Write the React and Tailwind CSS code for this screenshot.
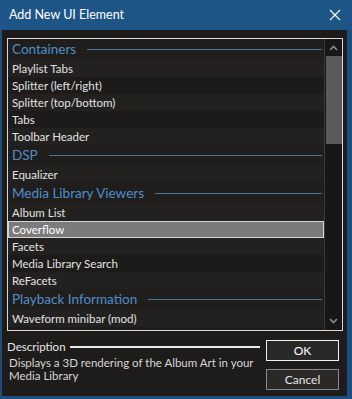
import React from "react";

const rows = [
  { type: "h", label: "Containers" },
  { label: "Playlist Tabs" },
  { label: "Splitter (left/right)" },
  { label: "Splitter (top/bottom)" },
  { label: "Tabs" },
  { label: "Toolbar Header" },
  { type: "h", label: "DSP" },
  { label: "Equalizer" },
  { type: "h", label: "Media Library Viewers" },
  { label: "Album List" },
  { label: "Coverflow", selected: true },
  { label: "Facets" },
  { label: "Media Library Search" },
  { label: "ReFacets" },
  { type: "h", label: "Playback Information" },
  { label: "Waveform minibar (mod)" },
];

const font = { fontFamily: 'Lato, "Noto Sans", sans-serif' };

function Row({ row, idx }) {
  if (row.type === "h") {
    return (
      <div className="h-[21px] flex items-center pl-[4px] pr-[2px] bg-[#1f1e1d]">
        <span className="text-[13.5px] leading-none text-[#4f8ec8] whitespace-nowrap">
          {row.label}
        </span>
        <div className="flex-1 h-px bg-[#4d7398] ml-[11px]" />
      </div>
    );
  }
  if (row.selected) {
    return (
      <div className="h-[17px] flex items-center pl-[3px] bg-[#7b7b7b] border border-[#d4d4d4] text-white text-[11.5px]">
        {row.label}
      </div>
    );
  }
  return (
    <div
      className={
        "h-[17px] flex items-center pl-[4px] text-[11.5px] text-[#e2e2e2] " +
        (idx % 2 ? "bg-[#232120]" : "bg-[#1c1b1a]")
      }
    >
      {row.label}
    </div>
  );
}

export default function App() {
  return (
    <div
      className="w-[352px] h-[399px] bg-[#1c4f7e] flex flex-col overflow-hidden"
      style={font}
    >
      {/* title bar */}
      <div className="h-[30px] flex items-center justify-between pl-[9px] pr-[11px] bg-[#1d5586]">
        <span className="text-white text-[12.5px]">Add New UI Element</span>
        <svg width="12" height="12" viewBox="0 0 12 12">
          <path d="M1 1L11 11M11 1L1 11" stroke="#ffffff" strokeWidth="1.2" />
        </svg>
      </div>

      {/* body */}
      <div className="flex-1 ml-[2px] mr-[5px] mb-[3px] bg-[#1e1c1b] flex flex-col pt-[8px] pl-[5px] pr-[4px]">
        <div className="h-[293px] border border-[#d8d8d8] flex">
          <div className="flex-1 flex flex-col">
            {rows.map((r, i) => (
              <Row key={i} row={r} idx={i} />
            ))}
          </div>
          <div className="w-[18px] border-l border-[#3a3a3a] bg-[#171717] flex flex-col">
            <div className="h-[17px] flex items-center justify-center">
              <svg width="9" height="6" viewBox="0 0 9 6">
                <path d="M1 5L4.5 1.5L8 5" stroke="#8a8a8a" strokeWidth="1.6" fill="none" />
              </svg>
            </div>
            <div className="h-[88px] bg-[#5a5a5a] ml-[1px]" />
            <div className="flex-1" />
            <div className="h-[18px] flex items-center justify-center">
              <svg width="9" height="6" viewBox="0 0 9 6">
                <path d="M1 1L4.5 4.5L8 1" stroke="#8a8a8a" strokeWidth="1.6" fill="none" />
              </svg>
            </div>
          </div>
        </div>

        <div className="flex mt-[9px]">
          <div className="flex-1 flex flex-col">
            <div className="flex items-center h-[14px]">
              <span className="text-[11.5px] text-[#e6e6e6] leading-none">Description</span>
              <div className="h-[2px] bg-[#e8e8e8] ml-[4px] w-[190px]" />
            </div>
            <div className="text-[11.5px] text-[#d6d6d6] leading-[13px] pl-[2px] mt-[2px] pr-[2px]">
              Displays a 3D rendering of the Album Art in your Media Library
            </div>
          </div>
          <div className="w-[73px] flex flex-col gap-[8px] mr-[4px] ml-[3px]">
            <div className="h-[21px] border border-[#f0f0f0] bg-[#2a2928] flex items-center justify-center text-[12px] text-white">
              OK
            </div>
            <div className="h-[21px] border border-[#8a8a8a] bg-[#2a2928] flex items-center justify-center text-[12px] text-[#e6e6e6]">
              Cancel
            </div>
          </div>
        </div>
      </div>
    </div>
  );
}
